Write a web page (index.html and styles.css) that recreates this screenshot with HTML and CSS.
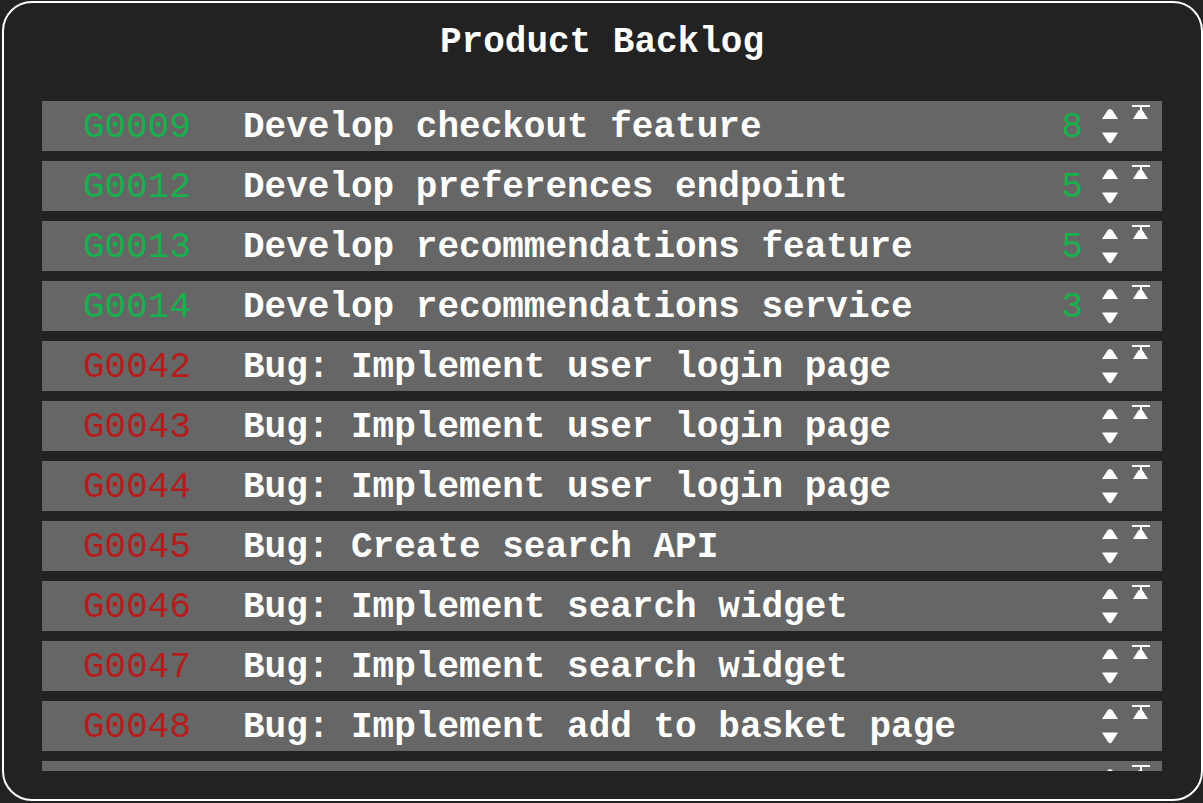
FILE: index.html
```html
<!DOCTYPE html>
<html lang="en">
<head>
<meta charset="utf-8">
<title>Product Backlog</title>
<link rel="stylesheet" href="styles.css">
</head>
<body>
<div class="panel">
  <h1 class="title">Product Backlog</h1>
  <div class="list">
    <div class="row"><span class="id goal">G0009</span><span class="name">Develop checkout feature</span><span class="pts">8</span><span class="arrows"><svg width="16" height="50" viewBox="0 0 16 50"><path d="M0 18 L5.5 9.5 Q8 6.5 10.5 9.5 L16 18 Z" fill="#fff"/><path d="M0 31.5 L16 31.5 L10 41 Q8 43.5 6 41 Z" fill="#fff"/></svg></span><span class="top"><svg width="18" height="50" viewBox="0 0 18 50"><rect x="0" y="4" width="18" height="2" fill="#fff"/><rect x="8" y="5" width="2" height="4" fill="#fff"/><path d="M1 18 L6 10 Q8.5 7 11 10 L16 18 Z" fill="#fff"/></svg></span></div>
    <div class="row"><span class="id goal">G0012</span><span class="name">Develop preferences endpoint</span><span class="pts">5</span><span class="arrows"><svg width="16" height="50" viewBox="0 0 16 50"><path d="M0 18 L5.5 9.5 Q8 6.5 10.5 9.5 L16 18 Z" fill="#fff"/><path d="M0 31.5 L16 31.5 L10 41 Q8 43.5 6 41 Z" fill="#fff"/></svg></span><span class="top"><svg width="18" height="50" viewBox="0 0 18 50"><rect x="0" y="4" width="18" height="2" fill="#fff"/><rect x="8" y="5" width="2" height="4" fill="#fff"/><path d="M1 18 L6 10 Q8.5 7 11 10 L16 18 Z" fill="#fff"/></svg></span></div>
    <div class="row"><span class="id goal">G0013</span><span class="name">Develop recommendations feature</span><span class="pts">5</span><span class="arrows"><svg width="16" height="50" viewBox="0 0 16 50"><path d="M0 18 L5.5 9.5 Q8 6.5 10.5 9.5 L16 18 Z" fill="#fff"/><path d="M0 31.5 L16 31.5 L10 41 Q8 43.5 6 41 Z" fill="#fff"/></svg></span><span class="top"><svg width="18" height="50" viewBox="0 0 18 50"><rect x="0" y="4" width="18" height="2" fill="#fff"/><rect x="8" y="5" width="2" height="4" fill="#fff"/><path d="M1 18 L6 10 Q8.5 7 11 10 L16 18 Z" fill="#fff"/></svg></span></div>
    <div class="row"><span class="id goal">G0014</span><span class="name">Develop recommendations service</span><span class="pts">3</span><span class="arrows"><svg width="16" height="50" viewBox="0 0 16 50"><path d="M0 18 L5.5 9.5 Q8 6.5 10.5 9.5 L16 18 Z" fill="#fff"/><path d="M0 31.5 L16 31.5 L10 41 Q8 43.5 6 41 Z" fill="#fff"/></svg></span><span class="top"><svg width="18" height="50" viewBox="0 0 18 50"><rect x="0" y="4" width="18" height="2" fill="#fff"/><rect x="8" y="5" width="2" height="4" fill="#fff"/><path d="M1 18 L6 10 Q8.5 7 11 10 L16 18 Z" fill="#fff"/></svg></span></div>
    <div class="row"><span class="id bug">G0042</span><span class="name">Bug: Implement user login page</span><span class="pts"></span><span class="arrows"><svg width="16" height="50" viewBox="0 0 16 50"><path d="M0 18 L5.5 9.5 Q8 6.5 10.5 9.5 L16 18 Z" fill="#fff"/><path d="M0 31.5 L16 31.5 L10 41 Q8 43.5 6 41 Z" fill="#fff"/></svg></span><span class="top"><svg width="18" height="50" viewBox="0 0 18 50"><rect x="0" y="4" width="18" height="2" fill="#fff"/><rect x="8" y="5" width="2" height="4" fill="#fff"/><path d="M1 18 L6 10 Q8.5 7 11 10 L16 18 Z" fill="#fff"/></svg></span></div>
    <div class="row"><span class="id bug">G0043</span><span class="name">Bug: Implement user login page</span><span class="pts"></span><span class="arrows"><svg width="16" height="50" viewBox="0 0 16 50"><path d="M0 18 L5.5 9.5 Q8 6.5 10.5 9.5 L16 18 Z" fill="#fff"/><path d="M0 31.5 L16 31.5 L10 41 Q8 43.5 6 41 Z" fill="#fff"/></svg></span><span class="top"><svg width="18" height="50" viewBox="0 0 18 50"><rect x="0" y="4" width="18" height="2" fill="#fff"/><rect x="8" y="5" width="2" height="4" fill="#fff"/><path d="M1 18 L6 10 Q8.5 7 11 10 L16 18 Z" fill="#fff"/></svg></span></div>
    <div class="row"><span class="id bug">G0044</span><span class="name">Bug: Implement user login page</span><span class="pts"></span><span class="arrows"><svg width="16" height="50" viewBox="0 0 16 50"><path d="M0 18 L5.5 9.5 Q8 6.5 10.5 9.5 L16 18 Z" fill="#fff"/><path d="M0 31.5 L16 31.5 L10 41 Q8 43.5 6 41 Z" fill="#fff"/></svg></span><span class="top"><svg width="18" height="50" viewBox="0 0 18 50"><rect x="0" y="4" width="18" height="2" fill="#fff"/><rect x="8" y="5" width="2" height="4" fill="#fff"/><path d="M1 18 L6 10 Q8.5 7 11 10 L16 18 Z" fill="#fff"/></svg></span></div>
    <div class="row"><span class="id bug">G0045</span><span class="name">Bug: Create search API</span><span class="pts"></span><span class="arrows"><svg width="16" height="50" viewBox="0 0 16 50"><path d="M0 18 L5.5 9.5 Q8 6.5 10.5 9.5 L16 18 Z" fill="#fff"/><path d="M0 31.5 L16 31.5 L10 41 Q8 43.5 6 41 Z" fill="#fff"/></svg></span><span class="top"><svg width="18" height="50" viewBox="0 0 18 50"><rect x="0" y="4" width="18" height="2" fill="#fff"/><rect x="8" y="5" width="2" height="4" fill="#fff"/><path d="M1 18 L6 10 Q8.5 7 11 10 L16 18 Z" fill="#fff"/></svg></span></div>
    <div class="row"><span class="id bug">G0046</span><span class="name">Bug: Implement search widget</span><span class="pts"></span><span class="arrows"><svg width="16" height="50" viewBox="0 0 16 50"><path d="M0 18 L5.5 9.5 Q8 6.5 10.5 9.5 L16 18 Z" fill="#fff"/><path d="M0 31.5 L16 31.5 L10 41 Q8 43.5 6 41 Z" fill="#fff"/></svg></span><span class="top"><svg width="18" height="50" viewBox="0 0 18 50"><rect x="0" y="4" width="18" height="2" fill="#fff"/><rect x="8" y="5" width="2" height="4" fill="#fff"/><path d="M1 18 L6 10 Q8.5 7 11 10 L16 18 Z" fill="#fff"/></svg></span></div>
    <div class="row"><span class="id bug">G0047</span><span class="name">Bug: Implement search widget</span><span class="pts"></span><span class="arrows"><svg width="16" height="50" viewBox="0 0 16 50"><path d="M0 18 L5.5 9.5 Q8 6.5 10.5 9.5 L16 18 Z" fill="#fff"/><path d="M0 31.5 L16 31.5 L10 41 Q8 43.5 6 41 Z" fill="#fff"/></svg></span><span class="top"><svg width="18" height="50" viewBox="0 0 18 50"><rect x="0" y="4" width="18" height="2" fill="#fff"/><rect x="8" y="5" width="2" height="4" fill="#fff"/><path d="M1 18 L6 10 Q8.5 7 11 10 L16 18 Z" fill="#fff"/></svg></span></div>
    <div class="row"><span class="id bug">G0048</span><span class="name">Bug: Implement add to basket page</span><span class="pts"></span><span class="arrows"><svg width="16" height="50" viewBox="0 0 16 50"><path d="M0 18 L5.5 9.5 Q8 6.5 10.5 9.5 L16 18 Z" fill="#fff"/><path d="M0 31.5 L16 31.5 L10 41 Q8 43.5 6 41 Z" fill="#fff"/></svg></span><span class="top"><svg width="18" height="50" viewBox="0 0 18 50"><rect x="0" y="4" width="18" height="2" fill="#fff"/><rect x="8" y="5" width="2" height="4" fill="#fff"/><path d="M1 18 L6 10 Q8.5 7 11 10 L16 18 Z" fill="#fff"/></svg></span></div>
    <div class="row"><span class="id bug"></span><span class="name"></span><span class="pts"></span><span class="arrows"><svg width="16" height="50" viewBox="0 0 16 50"><path d="M0 18 L5.5 9.5 Q8 6.5 10.5 9.5 L16 18 Z" fill="#fff"/><path d="M0 31.5 L16 31.5 L10 41 Q8 43.5 6 41 Z" fill="#fff"/></svg></span><span class="top"><svg width="18" height="50" viewBox="0 0 18 50"><rect x="0" y="4" width="18" height="2" fill="#fff"/><rect x="8" y="5" width="2" height="4" fill="#fff"/><path d="M1 18 L6 10 Q8.5 7 11 10 L16 18 Z" fill="#fff"/></svg></span></div>
  </div>
</div>
</body>
</html>
```
FILE: styles.css
```css
html, body {
  margin: 0;
  padding: 0;
  background: #222222;
}

body {
  font-family: "Courier New", Courier, "Nimbus Mono PS", "Nimbus Mono L", FreeMono, "Liberation Mono", monospace;
  font-size: 36px;
  color: #ffffff;
}

.panel {
  box-sizing: border-box;
  width: 1201px;
  height: 800px;
  margin: 1px 0 0 2px;
  border: 2px solid #ffffff;
  border-radius: 30px;
  background: #222222;
  padding: 19px 39px 0 38px;
  display: flex;
  flex-direction: column;
}

.title {
  margin: 0;
  font-size: 36px;
  font-weight: bold;
  line-height: 41px;
  text-align: center;
  color: #ffffff;
}

.list {
  margin-top: 38px;
  height: 670px;
  overflow: hidden;
  display: flex;
  flex-direction: column;
  gap: 10px;
}

.row {
  flex: 0 0 50px;
  height: 50px;
  background: #666666;
  display: flex;
  align-items: stretch;
  padding-right: 12px;
  box-sizing: border-box;
}

.row > span {
  display: block;
  line-height: 50px;
  padding-top: 2px;
  height: 50px;
  box-sizing: border-box;
  white-space: pre;
}

.id {
  width: 201px;
  flex: 0 0 201px;
  padding-left: 41px;
  font-weight: normal;
}

.goal { color: #16b04c; }
.bug { color: #b51d1d; }

.name {
  flex: 1 1 auto;
  font-weight: bold;
  color: #ffffff;
}

.pts {
  flex: 0 0 24px;
  text-align: right;
  color: #16b04c;
  margin-right: 19px;
}

.row > .arrows {
  flex: 0 0 16px;
  padding-top: 0;
  margin-right: 14px;
}

.row > .top {
  flex: 0 0 18px;
  padding-top: 0;
}

.arrows svg, .top svg {
  display: block;
}
```
